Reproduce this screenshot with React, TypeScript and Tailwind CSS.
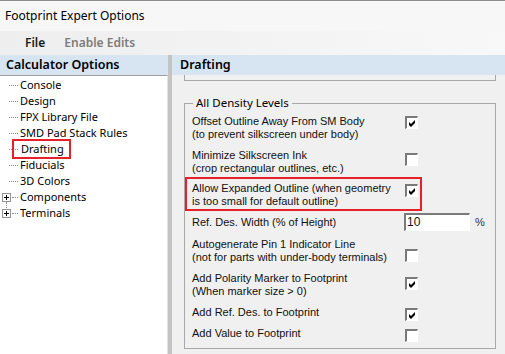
import React from 'react';

const ui = "font-['Noto_Sans',sans-serif]";
const classic = "font-['Liberation_Sans',Arial,sans-serif]";

interface TreeItem {
  label: string;
  expandable?: boolean;
  selected?: boolean;
}

const treeItems: TreeItem[] = [
  { label: 'Console' },
  { label: 'Design' },
  { label: 'FPX Library File' },
  { label: 'SMD Pad Stack Rules' },
  { label: 'Drafting', selected: true },
  { label: 'Fiducials' },
  { label: '3D Colors' },
  { label: 'Components', expandable: true },
  { label: 'Terminals', expandable: true },
];

const CheckBox: React.FC<{ checked?: boolean }> = ({ checked }) => (
  <div className="w-[13px] h-[13px] border-t-2 border-l-2 border-b border-r border-t-[#7a7a7a] border-l-[#7a7a7a] border-b-white border-r-white bg-white flex items-center justify-center">
    {checked && (
      <svg width="9" height="9" viewBox="0 0 9 9">
        <path d="M1 3 L3 5 L7 1 L7 4 L3 8 L1 6 Z" fill="#000" />
      </svg>
    )}
  </div>
);

const TreeRow: React.FC<{ item: TreeItem }> = ({ item }) => (
  <div className="h-4 flex items-center relative">
    {item.expandable ? (
      <>
        <div className="ml-[2px] w-[9px] h-[9px] border border-[#919191] bg-white relative shrink-0">
          <div className="absolute left-[1px] top-[3px] w-[5px] h-px bg-black" />
          <div className="absolute left-[3px] top-[1px] w-px h-[5px] bg-black" />
        </div>
        <div className="w-[6px] ml-px border-t border-dotted border-[#8a8a8a]" />
      </>
    ) : (
      <div className="ml-[9px] w-[9px] border-t border-dotted border-[#8a8a8a]" />
    )}
    <span
      className={
        item.selected
          ? 'ml-[-6px] pl-[7px] pr-[5px] border-2 border-[#e8202a] leading-[16px] h-[20px] flex items-center'
          : 'ml-[2px]'
      }
    >
      {item.label}
    </span>
  </div>
);

interface OptionRow {
  lines: string[];
  checked?: boolean;
  mt: string;
  boxTop: string;
}

const Row: React.FC<OptionRow> = ({ lines, checked, mt, boxTop }) => (
  <div className={`${mt} ml-[7px] flex`}>
    <div className="w-[213px]">
      {lines.map((l) => (
        <div key={l}>{l}</div>
      ))}
    </div>
    <div className={boxTop}>
      <CheckBox checked={checked} />
    </div>
  </div>
);

const App: React.FC = () => {
  return (
    <div className="w-[505px] h-[354px] overflow-hidden bg-[#f0f0f0] flex flex-col text-black">
      {/* title bar */}
      <div className={`h-[31px] shrink-0 border-t border-[#8c8c8c] bg-[#f7f7f7] flex items-center pl-[5px] text-[12px] ${ui}`}>
        Footprint Expert Options
      </div>
      {/* menu */}
      <div className={`h-[24px] shrink-0 bg-gradient-to-r from-[#eeeeee] to-[#f8f8f8] flex items-center text-[12px] font-semibold ${ui}`}>
        <span className="ml-[25px] text-[#1a1a1a]">File</span>
        <span className="ml-[19px] text-[#7c7c7c]">Enable Edits</span>
      </div>

      <div className="flex flex-1 min-h-0">
        {/* left panel */}
        <div className="w-[168px] shrink-0 flex flex-col">
          <div className={`h-[20px] bg-[#d7e4f2] pl-[6px] flex items-center text-[12.5px] font-semibold ${ui}`}>
            Calculator Options
          </div>
          <div className={`flex-1 bg-white border-t border-[#a0a0a0] border-r border-r-[#e3e3e3] pt-px text-[11px] ${ui} relative`}>
            {treeItems.map((it) => (
              <TreeRow key={it.label} item={it} />
            ))}
            <div className="absolute left-[6px] top-[126px] h-[6px] border-l border-dotted border-[#8a8a8a]" />
          </div>
        </div>
        {/* splitter */}
        <div className="w-[4px] shrink-0 bg-[#c4c4c4]" />

        {/* right panel */}
        <div className="flex-1 flex flex-col">
          <div className={`h-[20px] shrink-0 bg-[#d7e4f2] pl-[8px] flex items-center text-[12.5px] font-semibold ${ui}`}>
            Drafting
          </div>
          <div className="ml-[12px] w-[312px] h-[6px] border-l border-r border-b border-[#a8a8a8]" />

          {/* group box */}
          <div className="ml-[12px] mt-[22px] w-[312px] border border-[#a8a8a8] relative pb-[6px]">
            <div className={`absolute left-[8px] top-[-9px] px-[3px] bg-[#f0f0f0] text-[11.5px] leading-[16px] ${ui}`}>
              All Density Levels
            </div>
            <div className={`text-[11px] leading-[13px] ${classic} text-[#111]`}>
              <Row mt="mt-[11px]" boxTop="mt-[1px]" checked lines={['Offset Outline Away From SM Body', '(to prevent silkscreen under body)']} />
              <Row mt="mt-[8px]" boxTop="mt-[4px]" lines={['Minimize Silkscreen Ink', '(crop rectangular outlines, etc.)']} />
              <div className="mt-[2px] w-[237px] h-[34px] border-2 border-[#e8202a] pl-[5px] pt-[3px] flex">
                <div className="w-[213px]">
                  <div>Allow Expanded Outline (when geometry</div>
                  <div>is too small for default outline)</div>
                </div>
                <div className="mt-[2px]">
                  <CheckBox checked />
                </div>
              </div>
              <div className="mt-[2px] ml-[7px] h-[18px] flex items-center">
                <div className="w-[212px]">Ref. Des. Width (% of Height)</div>
                <div className="w-[66px] h-[18px] border-t-2 border-l-2 border-b border-r border-t-[#7a7a7a] border-l-[#7a7a7a] border-b-white border-r-white bg-white text-[12px] leading-[14px] pl-[1px] font-['Liberation_Sans',sans-serif]">
                  10
                </div>
                <div className="ml-[5px] text-[#333]">%</div>
              </div>
              <Row mt="mt-[7px]" boxTop="mt-[11px]" lines={['Autogenerate Pin 1 Indicator Line', '(not for parts with under-body terminals)']} />
              <Row mt="mt-[8px]" boxTop="mt-[5px]" checked lines={['Add Polarity Marker to Footprint', '(When marker size > 0)']} />
              <Row mt="mt-[8px]" boxTop="mt-[2px]" checked lines={['Add Ref. Des. to Footprint']} />
              <Row mt="mt-[6px]" boxTop="mt-[2px]" lines={['Add Value to Footprint']} />
            </div>
          </div>
        </div>
      </div>
    </div>
  );
};

export default App;
